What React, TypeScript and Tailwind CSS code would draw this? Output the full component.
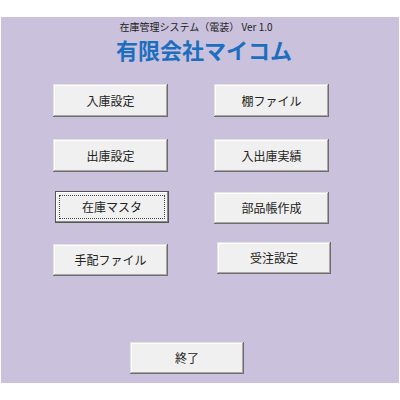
const font = { fontFamily: '"Noto Sans CJK JP", "Noto Sans", sans-serif' }

// フォーム上のボタン (Windows クラシック風)
function FormButton({
  label,
  className = '',
  focused = false,
}: {
  label: string
  className?: string
  focused?: boolean
}) {
  return (
    <button
      className={`flex shrink-0 items-center justify-center bg-[#f0f0f0] text-[12px] leading-none text-[#222] ${
        focused
          ? 'shadow-[inset_0_0_0_1px_#555,inset_-2px_-2px_0_#8a8a8a,inset_2px_2px_0_#fff]'
          : 'shadow-[inset_-1px_-1px_0_#6d6d6d,inset_1px_1px_0_#e2e2e2,inset_-2px_-2px_0_#a8a8a8,inset_2px_2px_0_#fff]'
      } ${className}`}
    >
      {focused ? (
        <span className="flex h-[calc(100%-8px)] w-[calc(100%-8px)] items-center justify-center border border-dotted border-[#444]">
          {label}
        </span>
      ) : (
        label
      )}
    </button>
  )
}

export default function App() {
  return (
    <div className="h-[400px] w-[400px] bg-white" style={font}>
      <div className="ml-[1px] mt-[17px] flex h-[366px] w-[398px] flex-col bg-[#cac1dc]">
        {/* ヘッダー */}
        <div className="flex h-[67px] flex-col items-center">
          <div className="mt-[3px] ml-[-8px] h-[14px] text-[10px] leading-[14px] text-[#222]">
            在庫管理システム（電装） Ver 1.0
          </div>
          <div className="ml-[8px] mt-[2px] text-[22px] font-bold leading-[26px] text-[#1c6fbf]">
            有限会社マイコム
          </div>
        </div>

        {/* 1行目 */}
        <div className="flex items-start">
          <FormButton label="入庫設定" className="ml-[52px] h-[33px] w-[115px]" />
          <FormButton label="棚ファイル" className="ml-[46px] h-[33px] w-[115px]" />
        </div>

        {/* 2行目 */}
        <div className="mt-[22px] flex items-start">
          <FormButton label="出庫設定" className="ml-[52px] h-[33px] w-[115px]" />
          <FormButton label="入出庫実績" className="ml-[46px] h-[33px] w-[115px]" />
        </div>

        {/* 3行目 */}
        <div className="mt-[19px] flex items-start">
          <FormButton label="在庫マスタ" focused className="ml-[54px] h-[32px] w-[114px]" />
          <FormButton label="部品帳作成" className="ml-[45px] mt-[1px] h-[32px] w-[115px]" />
        </div>

        {/* 4行目 */}
        <div className="mt-[18px] flex items-start">
          <FormButton label="手配ファイル" className="ml-[52px] mt-[2px] h-[32px] w-[115px]" />
          <FormButton label="受注設定" className="ml-[49px] h-[32px] w-[114px]" />
        </div>

        {/* 終了 */}
        <div className="mt-[66px] flex">
          <FormButton label="終了" className="ml-[129px] h-[32px] w-[114px]" />
        </div>
      </div>
    </div>
  )
}
